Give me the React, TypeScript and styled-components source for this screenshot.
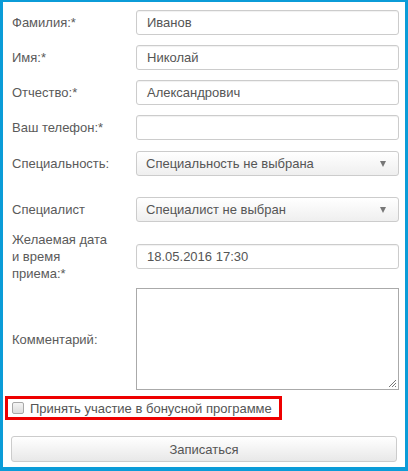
import React from "react";
import styled, { createGlobalStyle } from "styled-components";

const Global = createGlobalStyle`
  html, body { margin: 0; padding: 0; background: #fff; }
  body { font-family: "Liberation Sans", Arial, sans-serif; }
  * { box-sizing: border-box; }
`;

const Frame = styled.div`
  width: 408px;
  height: 471px;
  border-style: solid;
  border-color: #0b9cd8;
  border-width: 2px 3px 4px 3px;
  padding: 8px 6px 0 9px;
  background: #fff;
  font-family: "Liberation Sans", Arial, sans-serif;
  font-size: 13px;
  color: #555;
`;

const Row = styled.div<{ $mt: number }>`
  display: grid;
  grid-template-columns: 124px 263px;
  align-items: center;
  margin-top: ${(p) => p.$mt}px;
`;

const Label = styled.label`
  color: #5a5a5a;
  font-size: 13px;
  line-height: 17px;
`;

const TextInput = styled.div`
  height: 25px;
  border: 1px solid #ccc;
  border-radius: 3px;
  box-shadow: inset 0 1px 1px rgba(0, 0, 0, 0.06);
  padding: 0 10px;
  display: flex;
  align-items: center;
  font-size: 13px;
  color: #555;
  background: #fff;
`;

const Select = styled.div`
  height: 25px;
  border: 1px solid #ccc;
  border-radius: 3px;
  padding: 0 10px 0 9px;
  display: flex;
  align-items: center;
  justify-content: space-between;
  font-size: 13px;
  color: #555;
  background: linear-gradient(#ffffff, #efefef);
`;

const Arrow = styled.span`
  width: 0;
  height: 0;
  border-left: 3.5px solid transparent;
  border-right: 3.5px solid transparent;
  border-top: 6px solid #777;
  margin-right: 2px;
`;

const TextArea = styled.div`
  position: relative;
  height: 102px;
  border: 1px solid #aaa;
  background: #fff;
`;

const Grip = styled.svg`
  position: absolute;
  right: 1px;
  bottom: 1px;
`;

const BonusBox = styled.div`
  margin-top: 6px;
  margin-left: -7px;
  width: 277px;
  height: 24px;
  border: 3px solid #ee0000;
  display: flex;
  align-items: center;
  padding-left: 4px;
  gap: 6px;
  font-size: 13px;
  color: #555;
`;

const Check = styled.span`
  width: 12px;
  height: 12px;
  border: 1px solid #a8a8a8;
  border-radius: 2px;
  background: linear-gradient(#f4f4f4, #dcdcdc);
`;

const Button = styled.div`
  margin-top: 16px;
  width: 386px;
  margin-left: -1px;
  height: 26px;
  border: 1px solid #ccc;
  border-radius: 3px;
  background: linear-gradient(#ffffff, #e8e8e8);
  display: flex;
  align-items: center;
  justify-content: center;
  color: #555;
  font-size: 13px;
`;

export default function App() {
  return (
    <>
      <Global />
      <Frame>
        <Row $mt={0}>
          <Label>Фамилия:*</Label>
          <TextInput>Иванов</TextInput>
        </Row>
        <Row $mt={10}>
          <Label>Имя:*</Label>
          <TextInput>Николай</TextInput>
        </Row>
        <Row $mt={10}>
          <Label>Отчество:*</Label>
          <TextInput>Александрович</TextInput>
        </Row>
        <Row $mt={10}>
          <Label>Ваш телефон:*</Label>
          <TextInput />
        </Row>
        <Row $mt={11}>
          <Label>Специальность:</Label>
          <Select>
            <span>Специальность не выбрана</span>
            <Arrow />
          </Select>
        </Row>
        <Row $mt={21}>
          <Label>Специалист</Label>
          <Select>
            <span>Специалист не выбран</span>
            <Arrow />
          </Select>
        </Row>
        <Row $mt={9}>
          <Label>
            Желаемая дата
            <br />и время
            <br />
            приема:*
          </Label>
          <TextInput>18.05.2016 17:30</TextInput>
        </Row>
        <Row $mt={6}>
          <Label>Комментарий:</Label>
          <TextArea>
            <Grip width="10" height="10" viewBox="0 0 10 10">
              <line x1="9" y1="2" x2="2" y2="9" stroke="#777" strokeWidth="1" />
              <line x1="9" y1="5" x2="5" y2="9" stroke="#777" strokeWidth="1" />
              <line x1="9" y1="8" x2="8" y2="9" stroke="#777" strokeWidth="1" />
            </Grip>
          </TextArea>
        </Row>
        <BonusBox>
          <Check />
          <span>Принять участие в бонусной программе</span>
        </BonusBox>
        <Button>Записаться</Button>
      </Frame>
    </>
  );
}
